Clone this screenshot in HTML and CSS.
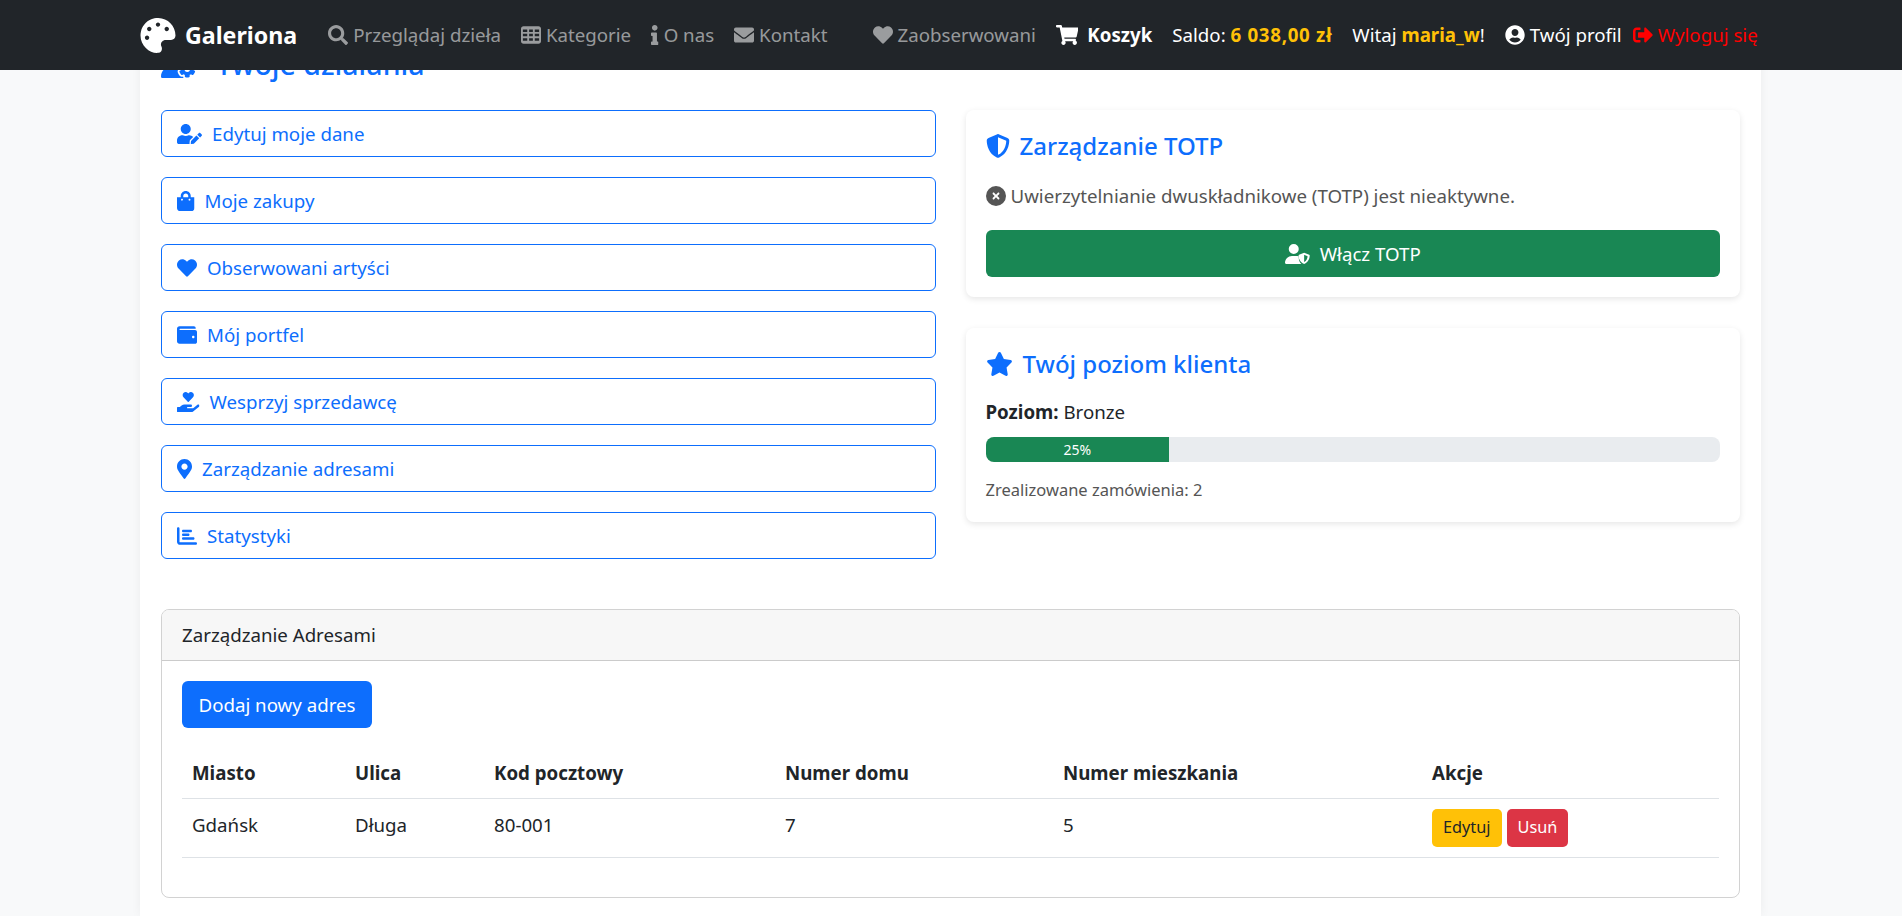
FILE: index.html
```html
<!DOCTYPE html>
<html lang="pl">
  <head>
    <meta charset="UTF-8">
    <meta name="viewport" content="width=device-width, initial-scale=1.0">
    <title>Galeriona</title>
    <link rel="stylesheet" href="styles.css">
  </head>
  <body>
    <svg class="sprite" xmlns="http://www.w3.org/2000/svg">
      <symbol id="i-palette" viewBox="0 0 512 512"><path d="M204.3 5C104.9 24.4 24.8 104.3 5.2 203.4c-37 187 131.7 326.4 258.8 306.7 41.2-6.4 61.4-54.6 42.5-91.7-23.1-45.4 9.9-98.4 60.9-98.4h79.7c35.8 0 64.8-29.6 64.9-65.3C511.5 97.1 368.1-26.9 204.3 5zM96 320c-17.7 0-32-14.3-32-32s14.3-32 32-32 32 14.3 32 32-14.3 32-32 32zm32-128c-17.7 0-32-14.3-32-32s14.3-32 32-32 32 14.3 32 32-14.3 32-32 32zm128-64c-17.7 0-32-14.3-32-32s14.3-32 32-32 32 14.3 32 32-14.3 32-32 32zm128 64c-17.7 0-32-14.3-32-32s14.3-32 32-32 32 14.3 32 32-14.3 32-32 32z"/></symbol>
      <symbol id="i-search" viewBox="0 0 512 512"><path d="M505 442.7L405.3 343c-4.5-4.5-10.6-7-17-7H372c27.6-35.3 44-79.7 44-128C416 93.1 322.9 0 208 0S0 93.1 0 208s93.1 208 208 208c48.3 0 92.7-16.4 128-44v16.3c0 6.4 2.5 12.5 7 17l99.7 99.7c9.4 9.4 24.6 9.4 33.9 0l28.3-28.3c9.4-9.4 9.4-24.6.1-34zM208 336c-70.7 0-128-57.2-128-128 0-70.7 57.2-128 128-128 70.7 0 128 57.2 128 128 0 70.7-57.2 128-128 128z"/></symbol>
      <symbol id="i-th" viewBox="0 0 512 512"><path d="M64 32C28.7 32 0 60.7 0 96V416c0 35.3 28.7 64 64 64H448c35.3 0 64-28.7 64-64V96c0-35.3-28.7-64-64-64H64zM48 112h112v64H48zm160 0h96v64H208zm144 0h112v64H352zM48 224h112v64H48zm160 0h96v64H208zm144 0h112v64H352zM48 336h112v64H48zm160 0h96v64H208zm144 0h112v64H352z" fill-rule="evenodd"/></symbol>
      <symbol id="i-info" viewBox="0 0 192 512"><path d="M20 424.229h20V279.771H20c-11.046 0-20-8.954-20-20V212c0-11.046 8.954-20 20-20h112c11.046 0 20 8.954 20 20v212.229h20c11.046 0 20 8.954 20 20V492c0 11.046-8.954 20-20 20H20c-11.046 0-20-8.954-20-20v-47.771c0-11.046 8.954-20 20-20zM96 0C56.235 0 24 32.235 24 72s32.235 72 72 72 72-32.235 72-72S135.764 0 96 0z"/></symbol>
      <symbol id="i-envelope" viewBox="0 0 512 512"><path d="M502.3 190.8c3.9-3.1 9.7-.2 9.7 4.7V400c0 26.5-21.5 48-48 48H48c-26.5 0-48-21.5-48-48V195.6c0-5 5.7-7.8 9.7-4.7 22.4 17.4 52.1 39.5 154.1 113.6 21.1 15.4 56.7 47.8 92.2 47.6 35.7.3 72-32.8 92.3-47.6 102-74.1 131.6-96.3 154-113.7zM256 320c23.2.4 56.6-29.2 73.4-41.4 132.7-96.3 142.8-104.7 173.4-128.7 5.8-4.5 9.2-11.5 9.2-18.9v-19c0-26.5-21.5-48-48-48H48C21.5 64 0 85.5 0 112v19c0 7.4 3.4 14.3 9.2 18.9 30.6 23.9 40.7 32.4 173.4 128.7 16.8 12.2 50.2 41.8 73.4 41.4z"/></symbol>
      <symbol id="i-heart" viewBox="0 0 512 512"><path d="M462.3 62.6C407.5 15.9 326 24.3 275.7 76.2L256 96.5l-19.7-20.3C186.1 24.3 104.5 15.9 49.7 62.6c-62.8 53.6-66.1 149.8-9.9 207.9l193.5 199.8c12.5 12.9 32.8 12.9 45.3 0l193.5-199.8c56.3-58.1 53-154.3-9.8-207.9z"/></symbol>
      <symbol id="i-cart" viewBox="0 0 576 512"><path d="M528.12 301.319l47.273-208C578.806 78.301 567.391 64 551.99 64H159.208l-9.166-44.81C147.758 8.021 137.93 0 126.529 0H24C10.745 0 0 10.745 0 24v16c0 13.255 10.745 24 24 24h69.883l70.248 343.435C147.325 417.1 136 435.222 136 456c0 30.928 25.072 56 56 56s56-25.072 56-56c0-15.674-6.447-29.835-16.824-40h209.647C430.447 426.165 424 440.326 424 456c0 30.928 25.072 56 56 56s56-25.072 56-56c0-22.172-12.888-41.332-31.579-50.405l5.517-24.276c3.413-15.018-8.002-29.319-23.403-29.319H218.117l-6.545-32h293.145c11.206 0 20.92-7.754 23.403-18.681z"/></symbol>
      <symbol id="i-user-circle" viewBox="0 0 496 512"><path d="M248 8C111 8 0 119 0 256s111 248 248 248 248-111 248-248S385 8 248 8zm0 96c48.6 0 88 39.4 88 88s-39.4 88-88 88-88-39.4-88-88 39.4-88 88-88zm0 344c-58.7 0-111.3-26.6-146.5-68.2 18.8-35.4 55.6-59.8 98.5-59.8 2.4 0 4.8.4 7.1 1.1 13 4.2 26.6 6.9 40.9 6.9 14.3 0 28-2.7 40.9-6.9 2.3-.7 4.7-1.1 7.1-1.1 42.9 0 79.7 24.4 98.5 59.8C359.3 421.4 306.7 448 248 448z"/></symbol>
      <symbol id="i-sign-out" viewBox="0 0 512 512"><path d="M497 273L329 441c-15 15-41 4.5-41-17v-96H152c-13.3 0-24-10.7-24-24v-96c0-13.3 10.7-24 24-24h136V88c0-21.4 25.9-32 41-17l168 168c9.3 9.4 9.3 24.6 0 34zM192 436v-40c0-6.6-5.4-12-12-12H96c-17.7 0-32-14.3-32-32V160c0-17.7 14.3-32 32-32h84c6.6 0 12-5.4 12-12V76c0-6.6-5.4-12-12-12H96c-53 0-96 43-96 96v192c0 53 43 96 96 96h84c6.6 0 12-5.4 12-12z"/></symbol>
      <symbol id="i-user-gear" viewBox="0 0 640 512"><path d="M224 0a128 128 0 1 1 0 256A128 128 0 1 1 224 0zM178.3 304h91.4c11.8 0 23.4 1.2 34.5 3.3c-2.1 18.5 7.4 35.6 21.8 44.8c-16.6 10.6-26.7 31.6-20 53.3c4 12.9 9.4 25.5 16.4 37.6s15.2 23.1 24.4 33c15.7 16.9 39.6 18.4 57.2 8.7v.9c0 9.2 2.7 18.5 7.9 26.3H29.7C13.3 512 0 498.7 0 482.3C0 383.8 79.8 304 178.3 304zM436 218.2c0-7 4.5-13.3 11.3-14.8c10.5-2.4 21.5-3.7 32.7-3.7s22.2 1.3 32.7 3.7c6.8 1.5 11.3 7.8 11.3 14.8v30.6c7.9 3.4 15.4 7.7 22.3 12.8l24.9-14.3c6.1-3.5 13.7-2.7 18.5 2.4c7.6 8.1 14.3 17.2 20.1 27.2s10.3 20.4 13.5 31c2.1 6.7-1.1 13.7-7.2 17.2l-25 14.4c.4 4 .7 8.1 .7 12.3s-.2 8.2-.7 12.3l25 14.4c6.1 3.5 9.2 10.5 7.2 17.2c-3.3 10.6-7.8 21-13.5 31s-12.5 19.1-20.1 27.2c-4.8 5.1-12.5 5.9-18.5 2.4l-24.9-14.3c-6.9 5.1-14.3 9.4-22.3 12.8l0 30.6c0 7-4.5 13.3-11.3 14.8c-10.5 2.4-21.5 3.7-32.7 3.7s-22.2-1.3-32.7-3.7c-6.8-1.5-11.3-7.8-11.3-14.8V454.8c-8-3.4-15.6-7.7-22.5-12.9l-24.7 14.3c-6.1 3.5-13.7 2.7-18.5-2.4c-7.6-8.1-14.3-17.2-20.1-27.2s-10.3-20.4-13.5-31c-2.1-6.7 1.1-13.7 7.2-17.2l24.8-14.3c-.4-4.1-.7-8.2-.7-12.4s.2-8.3 .7-12.4L343.8 325c-6.1-3.5-9.2-10.5-7.2-17.2c3.3-10.6 7.7-21 13.5-31s12.5-19.1 20.1-27.2c4.8-5.1 12.4-5.9 18.5-2.4l24.8 14.3c6.9-5.1 14.5-9.4 22.5-12.9V218.2zm92.1 133.5a48.1 48.1 0 1 0 -96.1 0 48.1 48.1 0 1 0 96.1 0z"/></symbol>
      <symbol id="i-user-edit" viewBox="0 0 640 512"><path d="M224 256c70.7 0 128-57.3 128-128S294.7 0 224 0 96 57.3 96 128s57.3 128 128 128zm89.6 32h-16.7c-22.2 10.2-46.9 16-72.9 16s-50.6-5.8-72.9-16h-16.7C60.2 288 0 348.2 0 422.4V464c0 26.5 21.5 48 48 48h274.9c-2.4-6.8-3.4-14-2.6-21.3l6.8-60.9 1.2-11.1 7.9-7.9 77.3-77.3c-24.5-27.7-60-45.5-99.9-45.5zm45.3 145.3l-6.8 61c-1.1 10.2 7.5 18.8 17.6 17.6l60.9-6.8 137.9-137.9-71.7-71.7-137.9 137.8zM633 268.9L595.1 231c-9.3-9.3-24.5-9.3-33.8 0l-37.8 37.8-4.1 4.1 71.8 71.7 41.8-41.8c9.3-9.4 9.3-24.5 0-33.9z"/></symbol>
      <symbol id="i-bag" viewBox="0 0 448 512"><path d="M352 160v-32C352 57.42 294.579 0 224 0 153.42 0 96 57.42 96 128v32H0v272c0 44.183 35.817 80 80 80h288c44.183 0 80-35.817 80-80V160h-96zm-192-32c0-35.29 28.71-64 64-64s64 28.71 64 64v32H160v-32zm160 120c-13.255 0-24-10.745-24-24s10.745-24 24-24 24 10.745 24 24-10.745 24-24 24zm-192 0c-13.255 0-24-10.745-24-24s10.745-24 24-24 24 10.745 24 24-10.745 24-24 24z"/></symbol>
      <symbol id="i-wallet" viewBox="0 0 512 512"><path d="M461.2 128H80c-8.84 0-16-7.16-16-16s7.16-16 16-16h384c8.84 0 16-7.16 16-16 0-26.51-21.49-48-48-48H64C28.65 32 0 60.65 0 96v320c0 35.35 28.65 64 64 64h397.2c28.02 0 50.8-21.53 50.8-48V176c0-26.47-22.78-48-50.8-48zM416 336c-17.67 0-32-14.33-32-32s14.33-32 32-32 32 14.33 32 32-14.33 32-32 32z"/></symbol>
      <symbol id="i-hand-heart" viewBox="0 0 576 512"><path d="M275.3 250.5c7 7.4 18.4 7.4 25.5 0l108.9-114.2c31.6-33.2 29.8-88.2-5.6-118.8-30.8-26.7-76.7-21.9-104.9 7.7L288 36.9l-11.1-11.6C248.7-4.4 202.8-9.2 172 17.5c-35.3 30.6-37.2 85.6-5.6 118.8l108.9 114.2zm290 77.6c-11.8-10.7-30.2-10-42.6 0L430.3 402c-11.3 9.1-25.4 14-40 14H272c-8.8 0-16-7.2-16-16s7.2-16 16-16h78.3c15.9 0 30.7-10.9 33.3-26.6 3.3-20-12.1-37.4-31.6-37.4H192c-27 0-53.1 9.3-74.1 26.3L71.4 384H16c-8.8 0-16 7.2-16 16v96c0 8.8 7.2 16 16 16h356.8c14.5 0 28.6-4.9 40-14L564 377c15.2-12.1 16.4-35.3 1.3-48.9z"/></symbol>
      <symbol id="i-marker" viewBox="0 0 384 512"><path d="M172.268 501.67C26.97 291.031 0 268.413 0 192 0 85.961 85.961 0 192 0s192 85.961 192 192c0 76.413-26.97 99.031-172.268 309.67-9.535 13.774-29.93 13.773-39.464 0zM192 272c44.183 0 80-35.817 80-80s-35.817-80-80-80-80 35.817-80 80 35.817 80 80 80z"/></symbol>
      <symbol id="i-chart" viewBox="0 0 512 512"><path d="M32 32c17.7 0 32 14.3 32 32V400c0 8.8 7.2 16 16 16H480c17.7 0 32 14.3 32 32s-14.3 32-32 32H80c-44.2 0-80-35.8-80-80V64C0 46.3 14.3 32 32 32zm96 96c0-17.7 14.3-32 32-32l192 0c17.7 0 32 14.3 32 32s-14.3 32-32 32l-192 0c-17.7 0-32-14.3-32-32zm32 64H288c17.7 0 32 14.3 32 32s-14.3 32-32 32H160c-17.7 0-32-14.3-32-32s14.3-32 32-32zm0 96H416c17.7 0 32 14.3 32 32s-14.3 32-32 32H160c-17.7 0-32-14.3-32-32s14.3-32 32-32z"/></symbol>
      <symbol id="i-shield" viewBox="0 0 512 512"><path d="M256 0c4.6 0 9.2 1 13.4 2.9L457.7 82.8c22 9.3 38.4 31 38.3 57.2c-.5 99.2-41.3 280.7-213.6 363.2c-16.7 8-36.1 8-52.8 0C57.3 420.7 16.5 239.2 16 140c-.1-26.2 16.3-47.9 38.3-57.2L242.7 2.9C246.8 1 251.4 0 256 0zm0 66.8V444.8C394 378 431.1 230.1 432 141.4L256 66.8z"/></symbol>
      <symbol id="i-star" viewBox="0 0 576 512"><path d="M316.9 18C311.6 7 300.4 0 288.1 0s-23.4 7-28.8 18L195 150.3 51.4 171.5c-12 1.8-22 10.2-25.7 21.7s-.7 24.2 7.9 32.7L137.8 329 113.2 474.7c-2 12 3 24.2 12.9 31.3s23 8 33.8 2.3l128.3-68.5 128.3 68.5c10.8 5.7 23.9 4.9 33.8-2.3s14.9-19.3 12.9-31.3L438.5 329 542.7 225.9c8.6-8.5 11.7-21.2 7.9-32.7s-13.7-19.9-25.7-21.7L381.2 150.3 316.9 18z"/></symbol>
      <symbol id="i-xmark" viewBox="0 0 512 512"><path d="M256 512A256 256 0 1 0 256 0a256 256 0 1 0 0 512zM175 175c9.4-9.4 24.6-9.4 33.9 0l47 47 47-47c9.4-9.4 24.6-9.4 33.9 0s9.4 24.6 0 33.9l-47 47 47 47c9.4 9.4 9.4 24.6 0 33.9s-24.6 9.4-33.9 0l-47-47-47 47c-9.4 9.4-24.6 9.4-33.9 0s-9.4-24.6 0-33.9l47-47-47-47c-9.4-9.4-9.4-24.6 0-33.9z"/></symbol>
      <symbol id="i-user-shield" viewBox="0 0 640 512"><path d="M224 256A128 128 0 1 0 224 0a128 128 0 1 0 0 256zm-45.7 48C79.8 304 0 383.8 0 482.3C0 498.7 13.3 512 29.7 512H418.3c-40-35-66-90-68-170l0-29c-25-6-52-9-80-9z"/><path d="M490 224l130 52c7 3 12 10 12 18c0 70-30 170-142 218c-112-48-142-148-142-218c0-8 5-15 12-18zm0 54v185c62-34 84-92 88-150z"/></symbol>
    </svg>

    <nav class="navbar">
      <a class="brand" href="#"><svg class="brand-icon"><use href="#i-palette"/></svg>Galeriona</a>
      <ul class="nav-links">
        <li><a href="#"><svg class="icon"><use href="#i-search"/></svg>Przeglądaj dzieła</a></li>
        <li><a href="#"><svg class="icon"><use href="#i-th"/></svg>Kategorie</a></li>
        <li><a href="#"><svg class="icon w-192"><use href="#i-info"/></svg>O nas</a></li>
        <li><a href="#"><svg class="icon"><use href="#i-envelope"/></svg>Kontakt</a></li>
      </ul>
      <ul class="nav-links nav-right">
        <li><a href="#"><svg class="icon"><use href="#i-heart"/></svg>Zaobserwowani</a></li>
        <li><a class="cart" href="#"><svg class="icon w-576"><use href="#i-cart"/></svg>Koszyk</a></li>
        <li class="saldo">Saldo: <b>6 038,00 zł</b></li>
        <li class="hello">Witaj <b>maria_w</b>!</li>
        <li><a class="profile" href="#"><svg class="icon"><use href="#i-user-circle"/></svg>Twój profil</a></li>
        <li class="logout-item"><a class="logout" href="#"><svg class="icon"><use href="#i-sign-out"/></svg>Wyloguj się</a></li>
      </ul>
    </nav>

    <main class="page">
      <h2 class="section-title"><svg class="icon w-640"><use href="#i-user-gear"/></svg>Twoje działania</h2>

      <div class="columns">
        <div class="actions">
          <a class="action" href="#"><svg class="icon w-640"><use href="#i-user-edit"/></svg>Edytuj moje dane</a>
          <a class="action" href="#"><svg class="icon w-448"><use href="#i-bag"/></svg>Moje zakupy</a>
          <a class="action" href="#"><svg class="icon"><use href="#i-heart"/></svg>Obserwowani artyści</a>
          <a class="action" href="#"><svg class="icon"><use href="#i-wallet"/></svg>Mój portfel</a>
          <a class="action" href="#"><svg class="icon w-576"><use href="#i-hand-heart"/></svg>Wesprzyj sprzedawcę</a>
          <a class="action" href="#"><svg class="icon w-384"><use href="#i-marker"/></svg>Zarządzanie adresami</a>
          <a class="action" href="#"><svg class="icon"><use href="#i-chart"/></svg>Statystyki</a>
        </div>

        <div class="side">
          <section class="panel">
            <h3 class="panel-title"><svg class="icon"><use href="#i-shield"/></svg>Zarządzanie TOTP</h3>
            <p class="totp-status"><svg class="icon"><use href="#i-xmark"/></svg>Uwierzytelnianie dwuskładnikowe (TOTP) jest nieaktywne.</p>
            <a class="btn btn-success" href="#"><svg class="icon w-640"><use href="#i-user-shield"/></svg>Włącz TOTP</a>
          </section>

          <section class="panel">
            <h3 class="panel-title"><svg class="icon w-576"><use href="#i-star"/></svg>Twój poziom klienta</h3>
            <p class="level-name"><b>Poziom:</b> Bronze</p>
            <div class="progress"><div class="progress-bar" style="width: 25%">25%</div></div>
            <p class="level-orders">Zrealizowane zamówienia: 2</p>
          </section>
        </div>
      </div>

      <section class="card">
        <div class="card-header">Zarządzanie Adresami</div>
        <div class="card-body">
          <a class="btn btn-primary" href="#">Dodaj nowy adres</a>
          <table class="table">
            <thead>
              <tr>
                <th class="col-city">Miasto</th>
                <th class="col-street">Ulica</th>
                <th class="col-zip">Kod pocztowy</th>
                <th class="col-house">Numer domu</th>
                <th class="col-flat">Numer mieszkania</th>
                <th>Akcje</th>
              </tr>
            </thead>
            <tbody>
              <tr>
                <td>Gdańsk</td>
                <td>Długa</td>
                <td>80-001</td>
                <td>7</td>
                <td>5</td>
                <td class="cell-actions">
                  <div class="row-actions">
                    <a class="btn-sm btn-warning" href="#">Edytuj</a>
                    <a class="btn-sm btn-danger" href="#">Usuń</a>
                  </div>
                </td>
              </tr>
            </tbody>
          </table>
        </div>
      </section>
    </main>
  </body>
</html>
```

FILE: styles.css
```css
* {
    box-sizing: border-box;
}
html, body {
    height: 100%;
    overflow: hidden;
}
body {
    margin: 0;
    background-color: #f8f9fa;
    color: #212529;
    font-family: "Noto Sans", "Open Sans", sans-serif;
    font-size: 18.7px;
    line-height: 30px;
}
a {
    text-decoration: none;
}
ul {
    list-style: none;
    margin: 0;
    padding: 0;
}
.sprite {
    position: absolute;
    width: 0;
    height: 0;
}

/* icons: height comes from font-size, width from the viewBox ratio */
.icon {
    flex: none;
    width: 1em;
    height: 1em;
    fill: currentColor;
    font-size: 20px;
}
.w-192 {
    width: 0.375em;
}
.w-384 {
    width: 0.75em;
}
.w-448 {
    width: 0.875em;
}
.w-576 {
    width: 1.125em;
}
.w-640 {
    width: 1.25em;
}

/* navbar */
.navbar {
    position: fixed;
    top: 0;
    left: 0;
    right: 0;
    z-index: 10;
    display: flex;
    align-items: center;
    height: 70px;
    padding-left: 140px;
    background-color: #212529;
    line-height: 24px;
}
.brand {
    display: flex;
    align-items: center;
    gap: 9px;
    color: white;
    font-size: 23.2px;
    font-weight: 700;
}
.brand-icon {
    width: 36px;
    height: 35px;
    fill: currentColor;
}
.nav-links {
    display: flex;
    align-items: center;
    gap: 20px;
    margin-left: 31px;
}
.nav-links a {
    display: flex;
    align-items: center;
    gap: 5px;
    color: rgba(255, 255, 255, 0.55);
}
.nav-right {
    margin-left: 45px;
    color: white;
}
.nav-right b {
    color: #ffc107;
}
.saldo b {
    letter-spacing: 0.7px;
}
.nav-links .cart {
    gap: 9px;
    color: white;
    font-weight: 700;
}
.nav-links .profile {
    color: white;
}
.logout-item {
    margin-left: -9px;
}
.nav-links .logout {
    color: red;
}

/* page */
.page {
    width: 1621px;
    height: 916px;
    margin-left: 140px;
    padding: 50px 21px 0;
    background-color: white;
    box-shadow: 0 0 10px rgba(0, 0, 0, 0.05);
}
.section-title {
    display: flex;
    align-items: center;
    gap: 20px;
    height: 28px;
    margin: 0 0 32px;
    color: #0d6efd;
    font-size: 28.5px;
    font-weight: 500;
    line-height: 28px;
}
.section-title .icon {
    font-size: 28px;
}
.columns {
    display: flex;
    gap: 30px;
}
.actions {
    display: flex;
    flex-direction: column;
    gap: 20px;
    width: 775px;
}
.action {
    display: flex;
    align-items: center;
    gap: 10px;
    height: 47px;
    padding-left: 15px;
    border: 1px solid #0d6efd;
    border-radius: 6px;
    color: #0d6efd;
}
.side {
    display: flex;
    flex-direction: column;
    gap: 31px;
    width: 775px;
}
.panel {
    padding: 20px;
    border-radius: 8px;
    box-shadow: 0 2px 6px rgba(0, 0, 0, 0.1);
}
.panel-title {
    display: flex;
    align-items: center;
    gap: 10px;
    margin: 0;
    color: #0d6efd;
    font-size: 24px;
    font-weight: 500;
    line-height: 31px;
}
.panel-title .icon {
    font-size: 24px;
}
.totp-status {
    display: flex;
    align-items: center;
    gap: 5px;
    margin: 20px 0 19px;
    color: #555;
}
.btn {
    display: flex;
    align-items: center;
    justify-content: center;
    gap: 10px;
    height: 47px;
    padding: 0 16px;
    border-radius: 6px;
    color: white;
}
.btn-success {
    background-color: #198754;
}
.btn-primary {
    width: 190px;
    background-color: #0d6efd;
}
.level-name {
    margin: 18px 0 10px;
}
.progress {
    height: 25px;
    border-radius: 8px;
    background-color: #e9ecef;
    overflow: hidden;
}
.progress-bar {
    height: 100%;
    background-color: #198754;
    color: white;
    font-size: 14px;
    line-height: 25px;
    text-align: center;
}
.level-orders {
    margin: 15px 0 0;
    color: #555;
    font-size: 16.5px;
    line-height: 25px;
}

/* addresses */
.card {
    height: 289px;
    margin-top: 50px;
    border: 1px solid rgba(0, 0, 0, 0.175);
    border-radius: 8px;
    overflow: hidden;
}
.card-header {
    height: 51px;
    padding: 10px 20px;
    background-color: #f7f7f7;
    border-bottom: 1px solid rgba(0, 0, 0, 0.175);
}
.card-body {
    padding: 20px;
}
.table {
    width: 100%;
    margin-top: 20px;
    border-collapse: collapse;
    table-layout: fixed;
}
.table th {
    height: 50px;
    padding: 0 10px;
    border-bottom: 1px solid #dee2e6;
    font-weight: 700;
    text-align: left;
}
.table td {
    height: 59px;
    padding: 0 10px 6px;
    border-bottom: 1px solid #dee2e6;
}
.table .cell-actions {
    padding-bottom: 0;
}
.col-city {
    width: 163px;
}
.col-street {
    width: 139px;
}
.col-zip {
    width: 291px;
}
.col-house {
    width: 278px;
}
.col-flat {
    width: 369px;
}
.row-actions {
    display: flex;
    align-items: center;
    gap: 5px;
}
.btn-sm {
    height: 38px;
    padding: 0 11px;
    border-radius: 5px;
    font-size: 16.3px;
    line-height: 37px;
}
.btn-warning {
    background-color: #ffc107;
    color: #212529;
}
.btn-danger {
    background-color: #dc3545;
    color: white;
}
```
